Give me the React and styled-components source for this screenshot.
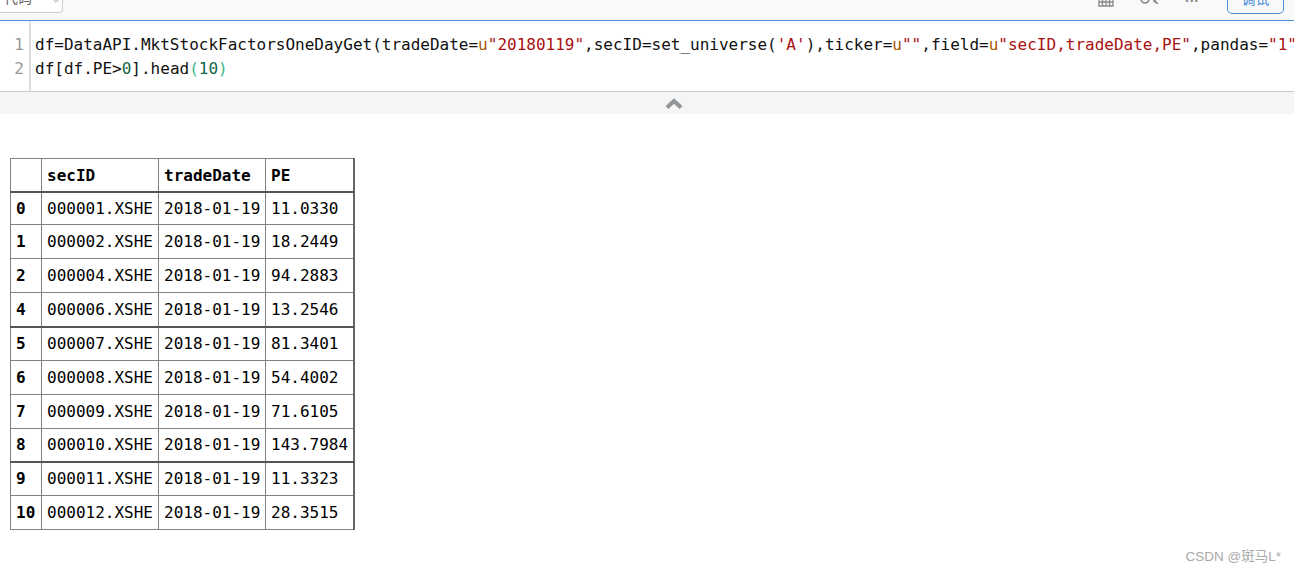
import React from 'react';
import styled, { createGlobalStyle } from 'styled-components';
import { ChevronDown } from 'lucide-react';

const rows = [
    ['0', '000001.XSHE', '2018-01-19', '11.0330'],
    ['1', '000002.XSHE', '2018-01-19', '18.2449'],
    ['2', '000004.XSHE', '2018-01-19', '94.2883'],
    ['4', '000006.XSHE', '2018-01-19', '13.2546'],
    ['5', '000007.XSHE', '2018-01-19', '81.3401'],
    ['6', '000008.XSHE', '2018-01-19', '54.4002'],
    ['7', '000009.XSHE', '2018-01-19', '71.6105'],
    ['8', '000010.XSHE', '2018-01-19', '143.7984'],
    ['9', '000011.XSHE', '2018-01-19', '11.3323'],
    ['10', '000012.XSHE', '2018-01-19', '28.3515'],
];

const heights = [33, 34, 34, 34, 34, 34, 34, 33, 34, 34];
const darkRows = ['4', '8'];

const App = () => {
    return (<Page>
        <GlobalStyle />
        <Toolbar>
            <CodeButton>代码<ChevronDown size={10} color="#888" /></CodeButton>
            <ToolbarRight>
                <GridIcon viewBox="0 0 16 14">
                    <path d="M1 0v13h14V0M1 5h14M1 9h14M4.5 0v13M8 0v13M11.5 0v13" />
                </GridIcon>
                <ShareIcon viewBox="0 0 22 14">
                    <circle cx="6" cy="9" r="4" />
                    <path d="M19 8l-4 3 4 3" />
                </ShareIcon>
                <Dots>···</Dots>
                <DebugButton>调试</DebugButton>
            </ToolbarRight>
        </Toolbar>
        <Editor>
            <Gutter>
                <LineNo>1</LineNo>
                <LineNo>2</LineNo>
            </Gutter>
            <Code>
                <Line>df=DataAPI.MktStockFactorsOneDayGet(tradeDate=<Kw>u</Kw><Str>"20180119"</Str>,secID=set_universe(<Str>'A'</Str>),ticker=<Kw>u</Kw><Str>""</Str>,field=<Kw>u</Kw><Str>"secID,tradeDate,PE"</Str>,pandas=<Str>"1"</Str>)</Line>
                <Line>df[df.PE&gt;<Num>0</Num>].head<Paren>(</Paren><Num>10</Num><Paren>)</Paren></Line>
            </Code>
        </Editor>
        <Collapse>
            <svg width="18" height="11" viewBox="0 0 18 11">
                <path d="M2 9.5l7-6.5 7 6.5" fill="none" stroke="#8f9499" strokeWidth="4" />
            </svg>
        </Collapse>
        <Table>
            <thead>
                <HeadRow>
                    <HeadCell $w={31}></HeadCell>
                    <HeadCell $w={117}>secID</HeadCell>
                    <HeadCell $w={107}>tradeDate</HeadCell>
                    <HeadCell $w={88}>PE</HeadCell>
                </HeadRow>
            </thead>
            <tbody>
                {rows.map((r, i) => (
                    <Row key={r[0]} $h={heights[i]} $dark={darkRows.includes(r[0])}>
                        <IndexCell>{r[0]}</IndexCell>
                        <Cell>{r[1]}</Cell>
                        <Cell>{r[2]}</Cell>
                        <Cell>{r[3]}</Cell>
                    </Row>
                ))}
            </tbody>
        </Table>
        <Watermark>CSDN @斑马L*</Watermark>
    </Page>);
}

export default App;

const GlobalStyle = createGlobalStyle`
    html, body {
        margin: 0;
        padding: 0;
        background: #fff;
        overflow: hidden;
    }
`

const Page = styled.div`
    position: relative;
    width: 1294px;
    height: 571px;
    overflow: hidden;
    font-family: "DejaVu Sans Mono", monospace;
    color: #000;
`

const Toolbar = styled.div`
    display: flex;
    justify-content: space-between;
    align-items: flex-end;
    padding: 0 10px 6px 0;
    height: 14px;
    background: #f9f9f9;
    border-bottom: 1px solid #4a90d9;
    overflow: hidden;
`

const CodeButton = styled.div`
    width: 63px;
    height: 24px;
    margin-bottom: 1px;
    box-sizing: border-box;
    background: #fff;
    border: 1px solid #ccc;
    border-left: 0;
    border-radius: 0 0 4px 0;
    display: flex;
    align-items: flex-end;
    gap: 19px;
    padding: 0 0 6px 4px;
    font: 14px "Noto Sans CJK SC", sans-serif;
    color: #666;
    line-height: 18px;
`

const ToolbarRight = styled.div`
    display: flex;
    align-items: flex-end;
`

const GridIcon = styled.svg`
    width: 16px;
    height: 14px;
    margin: 0 25px 7px 0;
    fill: none;
    stroke: #888;
    stroke-width: 1.3;
`

const ShareIcon = styled.svg`
    width: 22px;
    height: 14px;
    margin: 0 24px 10px 0;
    fill: none;
    stroke: #888;
    stroke-width: 1.6;
`

const Dots = styled.div`
    width: 42px;
    height: 14px;
    margin-bottom: 2px;
    font: bold 14px/6px "Liberation Sans", sans-serif;
    color: #888;
`

const DebugButton = styled.div`
    width: 57px;
    height: 26px;
    box-sizing: border-box;
    border: 1px solid #4a90d9;
    border-radius: 5px;
    color: #4a90d9;
    text-align: center;
    font: 14px/18px "Noto Sans CJK SC", sans-serif;
`

const Editor = styled.div`
    display: flex;
    height: 70px;
    border-bottom: 1px solid #ccc;
    overflow: hidden;
`

const Gutter = styled.div`
    width: 29px;
    flex: none;
    border-right: 2px solid #ddd;
    padding-top: 12px;
`

const LineNo = styled.div`
    height: 24px;
    line-height: 24px;
    text-align: right;
    padding-right: 5px;
    font-size: 16px;
    color: #999;
`

const Code = styled.div`
    padding: 12px 0 0 4px;
    white-space: pre;
`

const Line = styled.div`
    height: 24px;
    line-height: 24px;
    font-size: 16px;
    color: #111;
`

const Kw = styled.span`
    color: #a50;
`

const Str = styled.span`
    color: #a11;
`

const Num = styled.span`
    color: #164;
`

const Paren = styled.span`
    color: #3cb38a;
`

const Collapse = styled.div`
    height: 22px;
    background: #f5f5f5;
    display: flex;
    align-items: center;
    justify-content: center;
    padding-left: 54px;
    box-sizing: border-box;
`

const Table = styled.table`
    margin: 44px 0 0 10px;
    border-collapse: collapse;
    table-layout: fixed;
    width: 343px;
    font-size: 16px;
    border-right: 2px solid #666;
`

const HeadRow = styled.tr`
    height: 33px;
    border-bottom: 2px solid #555;
`

const HeadCell = styled.th`
    width: ${p => p.$w}px;
    border: 1px solid #808080;
    padding: 1px 5px 0;
    text-align: left;
    font-weight: bold;
    box-sizing: border-box;
    white-space: nowrap;
`

const Row = styled.tr`
    height: ${p => p.$h}px;
    border-bottom: ${p => (p.$dark ? '2px solid #555' : '1px solid #808080')};
`

const IndexCell = styled.th`
    border-left: 1px solid #808080;
    border-right: 1px solid #808080;
    padding: 0 5px;
    text-align: left;
    font-weight: bold;
`

const Cell = styled.td`
    border-left: 1px solid #808080;
    border-right: 1px solid #808080;
    padding: 0 5px;
    white-space: nowrap;
`

const Watermark = styled.div`
    position: absolute;
    right: 13px;
    bottom: 6px;
    font: 13.5px "Liberation Sans", "Noto Sans CJK SC", sans-serif;
    color: #aaa;
`
